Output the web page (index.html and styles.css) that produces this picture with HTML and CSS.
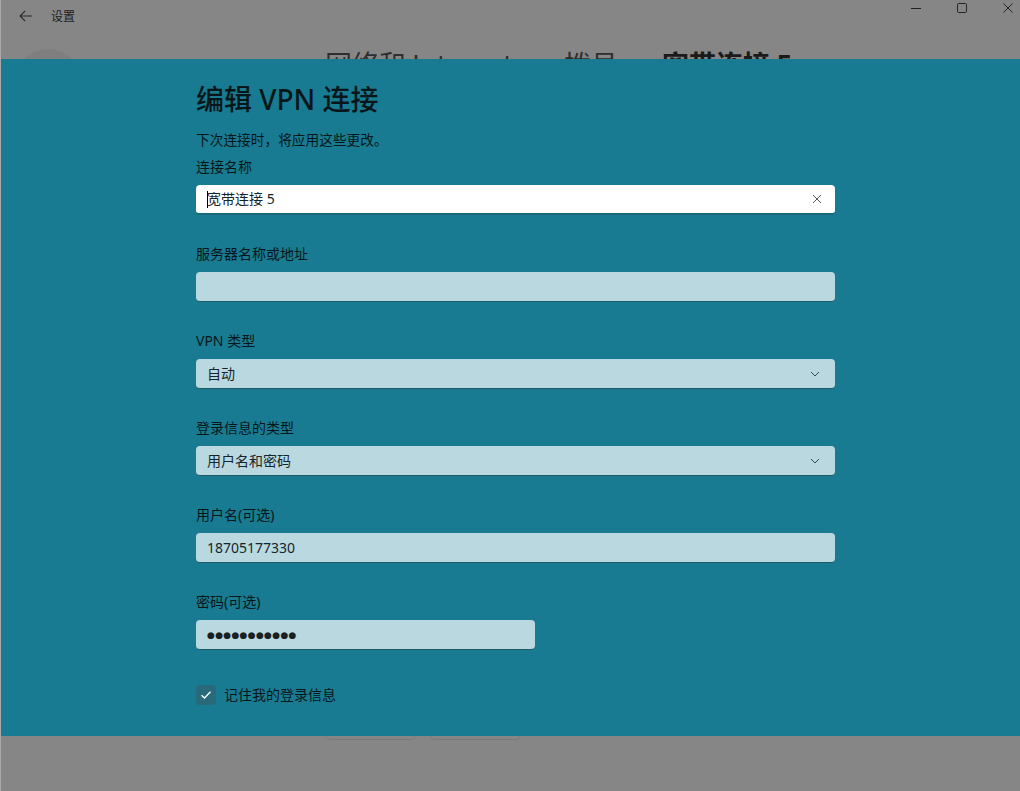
FILE: index.html
```html
<!DOCTYPE html>
<html lang="zh-CN">
<head>
<meta charset="utf-8">
<title>设置</title>
<link rel="stylesheet" href="styles.css">
</head>
<body>
<div class="window">
  <div class="titlebar">
    <div class="tb-left">
      <svg class="back" width="14" height="12" viewBox="0 0 14 12"><path d="M6 1 L1 6 L6 11 M1 6 H13" fill="none" stroke="#2b2b2b" stroke-width="1.1"/></svg>
      <span class="app-name">设置</span>
    </div>
    <div class="tb-controls">
      <svg width="12" height="12" viewBox="0 0 12 12"><path d="M1 6.5 H11" stroke="#222" stroke-width="1"/></svg>
      <svg width="12" height="12" viewBox="0 0 12 12"><rect x="1.5" y="1.5" width="9" height="9" rx="1.2" fill="none" stroke="#222" stroke-width="1"/></svg>
      <svg width="12" height="12" viewBox="0 0 12 12"><path d="M1.5 1.5 L10.5 10.5 M10.5 1.5 L1.5 10.5" stroke="#222" stroke-width="1"/></svg>
    </div>
  </div>
  <div class="page-head">
    <div class="avatar"></div>
    <div class="crumbs">
      <span class="prev first">网络和 Internet</span><span class="sep">›</span><span class="prev">拨号</span><span class="sep">›</span><span class="cur">宽带连接 5</span>
    </div>
  </div>
  <div class="bg-actions">
    <span class="bg-btn">连接</span><span class="bg-btn">删除</span>
  </div>

  <div class="dialog">
    <div class="form">
      <h1 class="title">编辑 VPN 连接</h1>
      <p class="subtitle">下次连接时，将应用这些更改。</p>

      <div class="field first">
        <label class="lbl">连接名称</label>
        <div class="box box-focus"><span class="caret"></span><span class="val">宽带连接 5</span>
          <svg class="clear" width="10" height="10" viewBox="0 0 10 10"><path d="M1 1 L9 9 M9 1 L1 9" stroke="#555" stroke-width="1"/></svg>
        </div>
      </div>

      <div class="field">
        <label class="lbl">服务器名称或地址</label>
        <div class="box"></div>
      </div>

      <div class="field">
        <label class="lbl">VPN 类型</label>
        <div class="box"><span class="val">自动</span>
          <svg class="chev" width="10" height="6" viewBox="0 0 10 6"><path d="M1 1 L5 5 L9 1" fill="none" stroke="#3c4a4e" stroke-width="1"/></svg>
        </div>
      </div>

      <div class="field">
        <label class="lbl">登录信息的类型</label>
        <div class="box"><span class="val">用户名和密码</span>
          <svg class="chev" width="10" height="6" viewBox="0 0 10 6"><path d="M1 1 L5 5 L9 1" fill="none" stroke="#3c4a4e" stroke-width="1"/></svg>
        </div>
      </div>

      <div class="field">
        <label class="lbl">用户名(可选)</label>
        <div class="box"><span class="val">18705177330</span></div>
      </div>

      <div class="field">
        <label class="lbl">密码(可选)</label>
        <div class="box box-short"><span class="dots">●●●●●●●●●●●</span></div>
      </div>

      <div class="check-row">
        <span class="check">
          <svg width="12" height="10" viewBox="0 0 12 10"><path d="M1.5 5.2 L4.5 8 L10.5 1.8" fill="none" stroke="#fff" stroke-width="1.3"/></svg>
        </span>
        <span class="check-lbl">记住我的登录信息</span>
      </div>
    </div>
  </div>
</div>
</body>
</html>
```

FILE: styles.css
```css
* { box-sizing: border-box; }
html, body { margin: 0; padding: 0; }
body {
  width: 1020px;
  height: 791px;
  overflow: hidden;
  background: #868686;
  font-family: "Segoe UI", "Noto Sans", "Noto Sans CJK SC", sans-serif;
  color: #0c1a1e;
}
.window {
  position: relative;
  width: 1020px;
  height: 791px;
  border-left: 1px solid #a9a9a9;
}
.titlebar {
  height: 32px;
  display: flex;
  justify-content: space-between;
  align-items: flex-start;
}
.tb-left {
  display: flex;
  align-items: center;
  padding: 10px 0 0 18px;
  gap: 18px;
}
.app-name {
  font-size: 12px;
  line-height: 12px;
  color: #1c1c1c;
  font-family: "Noto Sans CJK SC", sans-serif;
}
.tb-controls {
  display: flex;
  gap: 34px;
  padding: 2px 6px 0 0;
}
.page-head {
  display: flex;
  align-items: flex-start;
  padding: 17px 0 0 14px;
}
.avatar {
  width: 66px;
  height: 66px;
  border-radius: 50%;
  background: #7f7f7f;
  flex: none;
}
.crumbs {
  margin-left: 244px;
  margin-top: -5px;
  display: flex;
  gap: 19px;
  font-size: 27px;
  line-height: 40px;
  color: #262626;
  font-family: "Noto Sans CJK SC", sans-serif;
}
.crumbs .first { padding-right: 7px; }
.crumbs .prev { font-weight: 400; color: #2e2e2e; }
.crumbs .cur { font-weight: 600; color: #1a1a1a; }
.crumbs .sep { font-weight: 400; color: #6a6a6a; font-size: 20px; }
.bg-actions {
  display: flex;
  gap: 15px;
  margin: 593px 0 0 324px;
}
.bg-btn {
  width: 90px;
  height: 32px;
  border: 1px solid #7a7a7a;
  border-radius: 4px;
  display: flex;
  align-items: center;
  justify-content: center;
  font-size: 14px;
  color: #333;
  font-family: "Noto Sans CJK SC", sans-serif;
}
.dialog {
  position: absolute;
  left: 0;
  top: 59px;
  width: 1019px;
  height: 677px;
  background: #187b91;
  padding: 22px 0 0 195px;
}
.form { width: 639px; }
.title {
  margin: 0;
  font-size: 28px;
  line-height: 36px;
  font-weight: 500;
  color: #08161a;
  font-family: "Noto Sans", "Noto Sans CJK SC", sans-serif;
}
.subtitle {
  margin: 13px 0 0;
  font-size: 13.7px;
  line-height: 20px;
  color: #08161a;
}
.field { margin-top: 29px; }
.field.first { margin-top: 7px; }
.lbl {
  display: block;
  font-size: 14px;
  line-height: 20px;
  color: #08161a;
}
.box {
  position: relative;
  margin-top: 8px;
  height: 30px;
  border-radius: 4px;
  background: #bad8e0;
  border-bottom: 1px solid #1f5a67;
  display: flex;
  align-items: center;
  padding: 0 11px;
  font-size: 14px;
  color: #14262b;
}
.box-focus {
  background: #ffffff;
  border-bottom: 2px solid #176a7c;
}
.box-short { width: 339px; }
.caret {
  position: absolute;
  left: 11px;
  top: 6px;
  width: 1px;
  height: 17px;
  background: #000;
}
.val { line-height: 20px; }
.clear { position: absolute; right: 13px; top: 9px; }
.chev { position: absolute; right: 15px; top: 12px; }
.dots {
  font-size: 9px;
  letter-spacing: 0.3px;
  color: #1a1f21;
  font-family: "DejaVu Sans", sans-serif;
}
.check-row {
  margin-top: 35px;
  display: flex;
  align-items: center;
  gap: 8px;
}
.check {
  width: 20px;
  height: 20px;
  border-radius: 4px;
  background: #28697a;
  display: flex;
  align-items: center;
  justify-content: center;
}
.check-lbl {
  font-size: 14px;
  line-height: 20px;
  color: #08161a;
}
```
